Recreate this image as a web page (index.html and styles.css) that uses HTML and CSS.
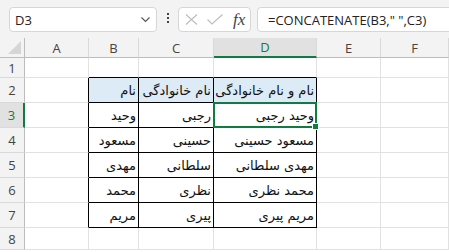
FILE: index.html
```html
<!DOCTYPE html>
<html>

<head>
  <link rel="stylesheet" href="styles.css">
</head>

<body>
  <div class="topbar">
    <div class="name-box">
      <span>D3</span>
      <svg class="chevron" width="9" height="6" viewBox="0 0 9 6"><path d="M0.5 0.5 L4.5 4.5 L8.5 0.5" fill="none" stroke="#555" stroke-width="1.1"/></svg>
    </div>
    <div class="dots"><i></i><i></i><i></i></div>
    <div class="fx-box">
      <svg width="13" height="11" viewBox="0 0 13 11"><path d="M1 0.5 L12 10.5 M12 0.5 L1 10.5" stroke="#bcbcbc" stroke-width="1.1"/></svg>
      <svg width="16" height="11" viewBox="0 0 16 11"><path d="M0.5 5.5 L5 10 L15.5 0.5" fill="none" stroke="#bcbcbc" stroke-width="1.1"/></svg>
      <span class="fx">fx</span>
    </div>
    <div class="formula">=CONCATENATE(B3," ",C3)</div>
  </div>

  <div class="sheet">
    <div class="hd corner"><svg width="13" height="13" viewBox="0 0 13 13"><path d="M13 0 L13 13 L0 13 Z" fill="#d6d6d6"/></svg></div>
    <div class="hd col">A</div>
    <div class="hd col">B</div>
    <div class="hd col">C</div>
    <div class="hd col active-col">D</div>
    <div class="hd col">E</div>
    <div class="hd col">F</div>

    <div class="hd row">1</div>
    <div class="cell"></div>
    <div class="cell above"></div>
    <div class="cell above"></div>
    <div class="cell above"></div>
    <div class="cell"></div>
    <div class="cell"></div>

    <div class="hd row">2</div>
    <div class="cell before"></div>
    <div class="cell tb head">نام</div>
    <div class="cell tb head">نام خانوادگی</div>
    <div class="cell tb head">نام و نام خانوادگی</div>
    <div class="cell"></div>
    <div class="cell"></div>

    <div class="hd row active-row">3</div>
    <div class="cell before"></div>
    <div class="cell tb">وحید</div>
    <div class="cell tb">رجبی</div>
    <div class="cell tb selected">وحید رجبی<div class="sel"><i></i></div></div>
    <div class="cell"></div>
    <div class="cell"></div>

    <div class="hd row">4</div>
    <div class="cell before"></div>
    <div class="cell tb">مسعود</div>
    <div class="cell tb">حسینی</div>
    <div class="cell tb">مسعود حسینی</div>
    <div class="cell"></div>
    <div class="cell"></div>

    <div class="hd row">5</div>
    <div class="cell before"></div>
    <div class="cell tb">مهدی</div>
    <div class="cell tb">سلطانی</div>
    <div class="cell tb">مهدی سلطانی</div>
    <div class="cell"></div>
    <div class="cell"></div>

    <div class="hd row">6</div>
    <div class="cell before"></div>
    <div class="cell tb">محمد</div>
    <div class="cell tb">نظری</div>
    <div class="cell tb">محمد نظری</div>
    <div class="cell"></div>
    <div class="cell"></div>

    <div class="hd row">7</div>
    <div class="cell before"></div>
    <div class="cell tb">مریم</div>
    <div class="cell tb">پیری</div>
    <div class="cell tb">مریم پیری</div>
    <div class="cell"></div>
    <div class="cell"></div>

    <div class="hd row">8</div>
    <div class="cell"></div>
    <div class="cell"></div>
    <div class="cell"></div>
    <div class="cell"></div>
    <div class="cell"></div>
    <div class="cell"></div>
  </div>
</body>

</html>
```

FILE: styles.css
```css
body {
  margin: 0;
  width: 449px;
  height: 252px;
  overflow: hidden;
  background: #fff;
  font-family: "Open Sans", "Noto Sans", sans-serif;
}

/* formula bar */
.topbar {
  display: flex;
  align-items: flex-start;
  height: 38px;
  padding-top: 7px;
  box-sizing: border-box;
  background: #f3f3f3;
  overflow: hidden;
}
.topbar > * {
  flex-shrink: 0;
}
.name-box,
.fx-box,
.formula {
  height: 25px;
  box-sizing: border-box;
  background: #fff;
  border: 1px solid #d6d6d6;
  border-radius: 4px;
  display: flex;
  align-items: center;
}
.name-box {
  margin-left: 9px;
  width: 148px;
  padding: 0 6px 0 5px;
  justify-content: space-between;
  font-size: 13px;
  color: #222;
}
.dots {
  width: 21px;
  display: flex;
  flex-direction: column;
  align-items: center;
  gap: 2px;
  padding-top: 6px;
}
.dots i {
  display: block;
  width: 2px;
  height: 2px;
  background: #444;
}
.fx-box {
  width: 73px;
  padding: 0 4px 0 6px;
  gap: 9px;
}
.fx {
  font-family: "Liberation Serif", "DejaVu Serif", serif;
  font-style: italic;
  font-size: 17px;
  color: #444;
  margin-left: 1px;
  line-height: 1;
}
.formula {
  margin-left: 6px;
  width: 240px;
  padding-left: 10px;
  font-size: 13px;
  color: #222;
}

/* grid */
.sheet {
  display: grid;
  grid-template-columns: 25px 64px 50px 75px 103px 64px 68px;
  grid-template-rows: 20px 20px repeat(6, 25px) 22px;
}
.sheet > div {
  box-sizing: border-box;
  border-right: 1px solid #e1e1e1;
  border-bottom: 1px solid #e1e1e1;
}
.hd {
  background: #f3f3f3;
  color: #444;
  font-size: 13px;
  display: flex;
  align-items: center;
  justify-content: center;
}
.sheet > .col {
  border-right-color: #d9d9d9;
  border-bottom-color: #bcbcbc;
}
.sheet > .row {
  border-right-color: #bcbcbc;
  border-bottom-color: #d9d9d9;
}
.sheet > .corner {
  justify-content: flex-end;
  align-items: flex-end;
  padding: 0 3px 3px 0;
  border-right-color: #bcbcbc;
  border-bottom-color: #bcbcbc;
}
.sheet > .active-col {
  background: #e1e1e1;
  color: #107c41;
  border-bottom: 2px solid #107c41;
}
.sheet > .active-row {
  background: #e1e1e1;
  color: #107c41;
  border-right: 2px solid #107c41;
}

.cell {
  direction: rtl;
  display: flex;
  align-items: flex-end;
  white-space: nowrap;
  overflow: hidden;
  padding: 0 2px 4px 2px;
  font-family: "DejaVu Sans", sans-serif;
  font-size: 13px;
  color: #111;
}
.sheet > .above {
  border-bottom-color: #000;
}
.sheet > .before {
  border-right-color: #000;
}
.sheet > .tb {
  border-right-color: #000;
  border-bottom-color: #000;
}
.head {
  background: #ddebf7;
}
.selected {
  position: relative;
  overflow: visible;
}
.sel {
  position: absolute;
  top: -1px;
  left: -1px;
  right: -1px;
  bottom: -1px;
  border: 2px solid #107c41;
}
.sel i {
  position: absolute;
  right: -4px;
  bottom: -4px;
  width: 5px;
  height: 5px;
  background: #107c41;
  border: 1px solid #fff;
}
```
